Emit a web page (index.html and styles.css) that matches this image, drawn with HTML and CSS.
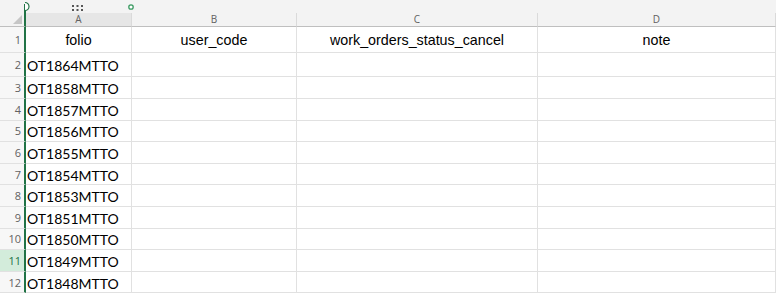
FILE: index.html
```html
<!DOCTYPE html>
<html lang="en">
<head>
    <meta charset="UTF-8">
    <meta name="viewport" content="width=device-width, initial-scale=1.0">
    <title>Sheet</title>
    <link rel="stylesheet" href="styles.css">
</head>
<body>
    <div class="sheet">
        <div class="topbar">
            <div class="freeze-top"></div>
            <svg class="handle-left" width="8" height="14" viewBox="0 0 8 14">
                <path d="M1 2.5 A4 4 0 0 1 1 10.5" fill="#fff" stroke="#217346" stroke-width="1.2"/>
            </svg>
            <svg class="grip" width="12" height="8" viewBox="0 0 12 8">
                <rect x="0" y="1" width="2" height="2" fill="#555"/>
                <rect x="4.5" y="1" width="2" height="2" fill="#555"/>
                <rect x="9" y="1" width="2" height="2" fill="#555"/>
                <rect x="0" y="5" width="2" height="2" fill="#555"/>
                <rect x="4.5" y="5" width="2" height="2" fill="#555"/>
                <rect x="9" y="5" width="2" height="2" fill="#555"/>
            </svg>
            <svg class="handle-right" width="8" height="8" viewBox="0 0 8 8">
                <circle cx="4" cy="4" r="2.2" fill="#fff" stroke="#3b9a62" stroke-width="1.3"/>
            </svg>
        </div>

        <div class="grid" id="grid">
            <div class="corner"><span class="tri"></span></div>
            <div class="colhead selected">A</div>
            <div class="colhead">B</div>
            <div class="colhead">C</div>
            <div class="colhead">D</div>
        </div>
    </div>

    <script>
        let headers = ["folio", "user_code", "work_orders_status_cancel", "note"];
        let folios = ["OT1864MTTO", "OT1858MTTO", "OT1857MTTO", "OT1856MTTO", "OT1855MTTO",
                      "OT1854MTTO", "OT1853MTTO", "OT1851MTTO", "OT1850MTTO", "OT1849MTTO", "OT1848MTTO"];

        let grid = document.getElementById("grid");
        let html = `<div class="rowhead">1</div>`;
        headers.forEach(h => {
            html += `<div class="cell head">${h}</div>`;
        });

        folios.forEach((f, i) => {
            let n = i + 2;
            html += `<div class="rowhead ${n == 11 ? "active" : ""}">${n}</div>
                     <div class="cell data">${f}</div>
                     <div class="cell"></div>
                     <div class="cell"></div>
                     <div class="cell"></div>`;
        });
        grid.innerHTML += html;
    </script>
</body>
</html>
```

FILE: styles.css
```css
body {
    margin: 0;
    background: #fff;
    overflow: hidden;
}
.sheet {
    width: 776px;
    height: 296px;
    overflow: hidden;
}
.topbar {
    position: relative;
    height: 13px;
    background: #f3f3f3;
}
.freeze-top {
    position: absolute;
    left: 24px;
    top: 4px;
    width: 2px;
    height: 9px;
    background: #217346;
}
.handle-left {
    position: absolute;
    left: 24px;
    top: 0;
}
.grip {
    position: absolute;
    left: 72px;
    top: 4px;
}
.handle-right {
    position: absolute;
    left: 127px;
    top: 3px;
}
.grid {
    display: grid;
    grid-template-columns: 26px 106px 165px 241px 238px;
    grid-template-rows: 14px 26px 24px 22px repeat(9, 21.6px) 22px;
}
.corner {
    position: relative;
    background: #f3f3f3;
    border-right: 2px solid #217346;
    border-bottom: 1px solid #bfbfbf;
}
.tri {
    position: absolute;
    right: 2px;
    bottom: 2px;
    width: 0;
    height: 0;
    border-left: 9px solid transparent;
    border-bottom: 9px solid #c6c6c6;
}
.colhead {
    background: #f3f3f3;
    border-right: 1px solid #dadada;
    border-bottom: 1px solid #bfbfbf;
    color: #616161;
    font-family: "Open Sans", sans-serif;
    font-size: 10px;
    line-height: 13px;
    text-align: center;
}
.colhead.selected {
    background: #e6e6e6;
}
.rowhead {
    background: #f7f7f7;
    border-right: 2px solid #217346;
    border-bottom: 1px solid #e1e1e1;
    color: #616161;
    font-family: "Open Sans", sans-serif;
    font-size: 11px;
    display: flex;
    align-items: center;
    justify-content: flex-end;
    padding-right: 3px;
    box-sizing: border-box;
}
.rowhead.active {
    background: #d3ecdb;
    color: #217346;
}
.cell {
    border-right: 1px solid #e1e1e1;
    border-bottom: 1px solid #e1e1e1;
    box-sizing: border-box;
    display: flex;
    align-items: center;
    overflow: hidden;
    white-space: nowrap;
}
.cell.head {
    justify-content: center;
    font-family: "Liberation Sans", Arial, sans-serif;
    font-size: 14.3px;
    color: #000;
}
.cell.data {
    font-family: Lato, "Liberation Sans", sans-serif;
    font-size: 14px;
    color: #000;
    padding-left: 1px;
    padding-top: 2px;
}
```
